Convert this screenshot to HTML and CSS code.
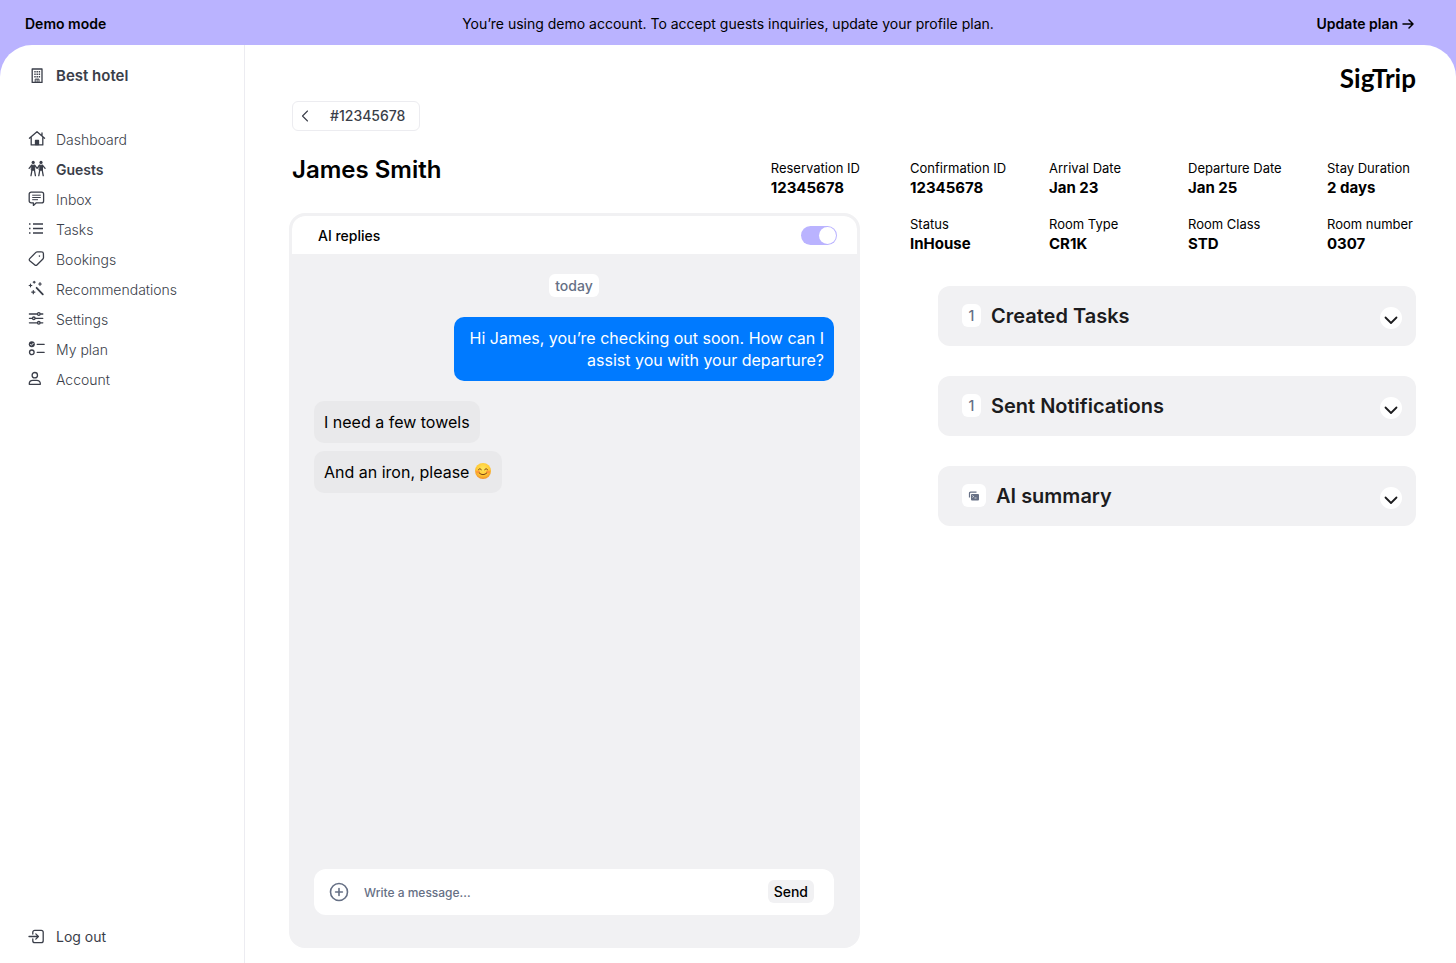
FILE: index.html
```html
<!DOCTYPE html>
<html lang="en">
<head>
<meta charset="utf-8">
<meta name="viewport" content="width=device-width, initial-scale=1">
<title>SigTrip – James Smith</title>
<link rel="stylesheet" href="styles.css">
</head>
<body>
<div class="banner">
  <strong class="banner-mode">Demo mode</strong>
  <span class="banner-text">You’re using demo account. To accept guests inquiries, update your profile plan.</span>
  <a class="banner-link" href="#plan">Update plan
    <svg width="12" height="12" viewBox="0 0 12 12" fill="none" stroke="currentColor" stroke-width="1.5" stroke-linecap="round" stroke-linejoin="round" aria-hidden="true"><path d="M1 6h10M7 2l4 4-4 4"/></svg>
  </a>
</div>
<div class="shell">
  <aside class="sidebar">
    <div class="hotel">
      <svg class="icon" viewBox="0 0 18 18" fill="none" stroke="currentColor" stroke-width="1.3" aria-hidden="true"><path d="M4.2 2h9.8v13.4H4.2z" stroke-linejoin="round"/><path d="M6.3 4.7h1.4M8.5 4.7h1.4M10.7 4.7h1.4M6.3 7.2h1.4M8.5 7.2h1.4M10.7 7.2h1.4M6.3 9.7h1.4M8.5 9.7h1.4M10.7 9.7h1.4" stroke-width="1.4"/><path d="M7.2 15v-2.9h3.8V15M9.1 12v3" stroke-width="1"/></svg>
      <span>Best hotel</span>
    </div>
    <nav class="nav" aria-label="Main">
      <a href="#dashboard">
        <svg class="icon" viewBox="0 0 18 18" fill="none" stroke="currentColor" stroke-width="1.3" stroke-linecap="round" stroke-linejoin="round" aria-hidden="true"><path d="M1.4 8.2 9 1.7l7.6 6.5M3.2 7v7.9h11.6V7M14 5.6V3"/><path d="M7.5 14.6v-4.2h3v4.2z" fill="currentColor"/></svg>
        <span>Dashboard</span></a>
      <a class="active" href="#guests" aria-current="page">
        <svg class="icon" viewBox="0 0 18 18" fill="none" stroke="currentColor" stroke-linecap="round" stroke-linejoin="round" aria-hidden="true"><circle cx="5.2" cy="2.4" r="1.6" fill="currentColor" stroke="none"/><circle cx="13" cy="2.4" r="1.6" fill="currentColor" stroke="none"/><path d="M3.7 5.2h3v5h-3zM11.5 5.2h3v5h-3z" fill="currentColor" stroke-width="1"/><path d="m3.6 5.3-2.5 3M6.8 5.3l2.3 3.1 2.3-3.1M14.6 5.3l2.5 3M4 10l-1 5.6M6.4 10l1 5.6M11.8 10l-1 5.6M14.2 10l1 5.6" stroke-width="1.3"/></svg>
        <span>Guests</span></a>
      <a href="#inbox">
        <svg class="icon" viewBox="0 0 18 18" fill="none" stroke="currentColor" stroke-width="1.3" stroke-linecap="round" stroke-linejoin="round" aria-hidden="true"><path d="M3.2 2.1h10.4a2 2 0 0 1 2 2v6.8a2 2 0 0 1-2 2H8.1l-2.7 2.5v-2.5H3.2a2 2 0 0 1-2-2V4.1a2 2 0 0 1 2-2z"/><path d="M4.6 5.2h7.8M4.6 7.5h7.8M4.6 9.7h5" stroke-width="1"/></svg>
        <span>Inbox</span></a>
      <a href="#tasks">
        <svg class="icon" viewBox="0 0 18 18" fill="none" stroke="currentColor" stroke-width="1.3" aria-hidden="true"><path d="M5 4h10M5 8.5h10M5 13h10"/><path d="M1 4h1.5M1 8.5h1.5M1 13h1.5" stroke-width="1.6"/></svg>
        <span>Tasks</span></a>
      <a href="#bookings">
        <svg class="icon" viewBox="0 0 18 18" fill="none" stroke="currentColor" stroke-width="1.3" stroke-linejoin="round" aria-hidden="true"><path d="m1.7 8.6 6.2-6.2c.4-.4.9-.6 1.4-.6l4.4.1c.9 0 1.6.7 1.7 1.6l.1 4c0 .6-.2 1.1-.6 1.5l-6 6c-.6.6-1.500.6-2 0L1.700 10.700c-.6-.6-.6-1.500 0-2.100z"/><circle cx="11.4" cy="6.1" r=".8" fill="currentColor" stroke="none"/></svg>
        <span>Bookings</span></a>
      <a href="#recommendations">
        <svg class="icon" viewBox="0 0 18 18" fill="none" stroke="currentColor" stroke-width="1.2" stroke-linecap="round" aria-hidden="true"><path d="m8.6 7.8 6.2 6.6" stroke-width="1.8"/><path d="M2.5 4.2v2.6M1.200 5.500h2.600M6.200 1.300v1.800M5.300 2.200h1.800M12 2.700v2.600M10.700 4h2.600M5.300 10.500v3.200M3.700 12.100h3.200"/></svg>
        <span>Recommendations</span></a>
      <a href="#settings">
        <svg class="icon" viewBox="0 0 18 18" fill="none" stroke="currentColor" stroke-width="1.3" stroke-linecap="round" aria-hidden="true"><path d="M1.4 4h7.8M12.4 4h2.4M1.4 8.3h2.8M7.4 8.3h7.4M1.4 12.8h7.8M12.4 12.8h2.4"/><circle cx="10.8" cy="4" r="1.3"/><circle cx="5.8" cy="8.3" r="1.3"/><circle cx="10.8" cy="12.8" r="1.3"/></svg>
        <span>Settings</span></a>
      <a href="#my-plan">
        <svg class="icon" viewBox="0 0 18 18" fill="none" stroke="currentColor" stroke-width="1.3" stroke-linecap="round" aria-hidden="true"><circle cx="3.8" cy="4.3" r="3" fill="currentColor" stroke="none"/><path d="m2.5 4.4.9.9 1.8-2" stroke="#fff" stroke-width=".9"/><circle cx="3.8" cy="12.3" r="2.3"/><path d="M9.2 4.3h7M9.2 12.3h7"/></svg>
        <span>My plan</span></a>
      <a href="#account">
        <svg class="icon" viewBox="0 0 18 18" fill="none" stroke="currentColor" stroke-width="1.3" stroke-linejoin="round" aria-hidden="true"><circle cx="6.8" cy="5.2" r="2.7"/><path d="M1.3 14.3v-.7c0-2 1.5-3.2 3.5-3.2h4c2 0 3.5 1.2 3.5 3.2v.7z"/></svg>
        <span>Account</span></a>
    </nav>
    <button class="logout" type="button">
      <svg class="icon" viewBox="0 0 18 18" fill="none" stroke="currentColor" stroke-width="1.3" stroke-linecap="round" stroke-linejoin="round" aria-hidden="true"><path d="M4.8 6V4.3a2 2 0 0 1 2-2h6.4a2 2 0 0 1 2 2v8.4a2 2 0 0 1-2 2H6.8a2 2 0 0 1-2-2V11M1 8.5h9.3M7.8 5.9l2.6 2.6-2.6 2.6"/></svg>
      <span>Log out</span>
    </button>
  </aside>

  <main class="main">
    <header class="topbar"><span class="logo">SigTrip</span></header>
    <button class="back" type="button">
      <svg width="8" height="12" viewBox="0 0 8 12" fill="none" stroke="currentColor" stroke-width="1.1" stroke-linecap="round" stroke-linejoin="round" aria-hidden="true"><path d="M6.500 1 1.500 6l5 5"/></svg>
      <span>#12345678</span>
    </button>

    <div class="content">
      <section class="conversation">
        <div class="guest">
          <h1>James Smith</h1>
          <dl class="fact"><dt>Reservation ID</dt><dd>12345678</dd></dl>
        </div>
        <div class="chat">
          <div class="chat-head">
            <label for="ai-replies">AI replies</label>
            <input class="switch" id="ai-replies" type="checkbox" role="switch" checked>
          </div>
          <div class="messages">
            <span class="day">today</span>
            <p class="bubble sent">Hi James, you’re checking out soon. How can I assist you with your departure?</p>
            <p class="bubble">I need a few towels</p>
            <p class="bubble">And an iron, please
              <svg class="emoji" viewBox="0 0 18 18" role="img" aria-label="Smiling face"><defs><radialGradient id="face" cx=".5" cy=".35" r=".65"><stop offset="0" stop-color="#ffe65c"/><stop offset=".65" stop-color="#ffc833"/><stop offset="1" stop-color="#f0902a"/></radialGradient></defs><circle cx="9" cy="9" r="8" fill="url(#face)"/><ellipse cx="4" cy="10" rx="2" ry="1.4" fill="#ff7b3a" opacity=".6"/><ellipse cx="14" cy="10" rx="2" ry="1.4" fill="#ff7b3a" opacity=".6"/><path d="M4.400 7.600q1.500-2.200 3 0M10.600 7.600q1.500-2.200 3 0M5.200 11q3.800 3.600 7.600 0" fill="none" stroke="#7a4216" stroke-width="1" stroke-linecap="round"/></svg></p>
          </div>
          <form class="composer">
            <button class="attach" type="button" aria-label="Add attachment">
              <svg width="20" height="20" viewBox="0 0 20 20" fill="none" stroke="currentColor" stroke-width="1.6" stroke-linecap="round" aria-hidden="true"><circle cx="10" cy="10" r="8.5"/><path d="M10 6.600v6.800M6.600 10h6.800"/></svg>
            </button>
            <input class="message-input" type="text" placeholder="Write a message..." aria-label="Message">
            <button class="send" type="button">Send</button>
          </form>
        </div>
      </section>

      <section class="details">
        <dl class="facts">
          <div class="fact"><dt>Confirmation ID</dt><dd>12345678</dd></div>
          <div class="fact"><dt>Arrival Date</dt><dd>Jan 23</dd></div>
          <div class="fact"><dt>Departure Date</dt><dd>Jan 25</dd></div>
          <div class="fact"><dt>Stay Duration</dt><dd>2 days</dd></div>
          <div class="fact"><dt>Status</dt><dd>InHouse</dd></div>
          <div class="fact"><dt>Room Type</dt><dd>CR1K</dd></div>
          <div class="fact"><dt>Room Class</dt><dd>STD</dd></div>
          <div class="fact"><dt>Room number</dt><dd>0307</dd></div>
        </dl>
        <div class="panels">
          <button class="panel" type="button" aria-expanded="false">
            <span class="badge">1</span><span class="panel-title">Created Tasks</span>
            <svg class="chevron" viewBox="0 0 22 22" aria-hidden="true"><circle cx="11" cy="11" r="11" fill="#fff"/><path d="m5.500 10.500 5.500 5.500 5.500-5.500" fill="none" stroke="currentColor" stroke-width="1.800" stroke-linecap="round" stroke-linejoin="round"/></svg>
          </button>
          <button class="panel" type="button" aria-expanded="false">
            <span class="badge">1</span><span class="panel-title">Sent Notifications</span>
            <svg class="chevron" viewBox="0 0 22 22" aria-hidden="true"><circle cx="11" cy="11" r="11" fill="#fff"/><path d="m5.500 10.500 5.500 5.500 5.500-5.500" fill="none" stroke="currentColor" stroke-width="1.800" stroke-linecap="round" stroke-linejoin="round"/></svg>
          </button>
          <button class="panel" type="button" aria-expanded="false">
            <span class="badge"><svg width="12" height="12" viewBox="0 0 12 12" aria-hidden="true"><path d="M1.500 7.500V3.200a1 1 0 0 1 1-1h6" fill="none" stroke="currentColor" stroke-width="1.200"/><rect x="3" y="4" width="8" height="6.500" rx="1" fill="currentColor"/><path d="m4.400 5.500 1.300 1-1.300 1M6.500 8h2" fill="none" stroke="#fff" stroke-width=".7"/></svg></span><span class="panel-title">AI summary</span>
            <svg class="chevron" viewBox="0 0 22 22" aria-hidden="true"><circle cx="11" cy="11" r="11" fill="#fff"/><path d="m5.500 10.500 5.500 5.500 5.500-5.500" fill="none" stroke="currentColor" stroke-width="1.800" stroke-linecap="round" stroke-linejoin="round"/></svg>
          </button>
        </div>
      </section>
    </div>
  </main>
</div>
</body>
</html>
```

FILE: styles.css
```css
* {
  box-sizing: border-box;
}

:root {
  --lilac: #bab3ff;
  --ink: #3a3e49;
  --surface: #f1f1f3;
  --muted: #667085;
}

body {
  margin: 0;
  min-height: 100vh;
  display: flex;
  flex-direction: column;
  background: var(--lilac);
  color: #000;
  font-family: Inter, "Liberation Sans", sans-serif;
  font-size: 14px;
  line-height: 20px;
}

h1, p, dl, dd {
  margin: 0;
}

a {
  color: inherit;
  text-decoration: none;
}

button {
  border: 0;
  padding: 0;
  background: none;
  color: inherit;
  font: inherit;
  cursor: pointer;
}

.banner {
  display: grid;
  grid-template-columns: 1fr auto 1fr;
  align-items: center;
  padding: 14px 25px 11px;
  column-gap: 16px;
}

.banner-mode {
  font-weight: 600;
}

.banner-link {
  justify-self: end;
  display: flex;
  align-items: center;
  gap: 4px;
  padding-right: 17px;
  font-weight: 600;
}

.shell {
  flex: 1;
  display: flex;
  background: #fff;
  border-radius: 32px 32px 0 0;
}

.sidebar {
  flex: none;
  width: 245px;
  display: flex;
  flex-direction: column;
  padding: 21px 16px 16px 28px;
  border-right: 1px solid #ececf1;
  color: var(--ink);
}

.icon {
  flex: none;
  width: 18px;
  height: 18px;
}

.hotel, .nav a, .logout {
  display: flex;
  align-items: center;
  gap: 10px;
}

.hotel {
  font-size: 15px;
  font-weight: 600;
}

.nav {
  display: flex;
  flex-direction: column;
  gap: 10px;
  margin-top: 44px;
  font-weight: 300;
}

.nav .icon {
  margin-bottom: 2px;
}

.nav .active {
  font-weight: 600;
}

.logout {
  margin-top: auto;
}

.main {
  flex: 1;
  min-width: 0;
  display: flex;
  flex-direction: column;
  padding: 16px 40px 15px 44px;
}

.topbar {
  display: flex;
  justify-content: flex-end;
  height: 40px;
}

.logo {
  font-family: Lato, sans-serif;
  font-size: 26px;
  font-weight: 700;
  line-height: 34px;
}

.back {
  align-self: flex-start;
  display: flex;
  align-items: center;
  gap: 21px;
  height: 30px;
  margin-left: 3px;
  padding: 0 14px 0 8px;
  border: 1px solid #ececf0;
  border-radius: 6px;
  color: var(--ink);
  font-weight: 500;
}

.content {
  flex: 1;
  display: grid;
  grid-template-columns: minmax(0, 571fr) minmax(0, 506fr);
  column-gap: 50px;
  margin-top: 29px;
}

.conversation {
  display: flex;
  flex-direction: column;
}

.guest {
  display: flex;
  justify-content: space-between;
  padding-left: 3px;
  height: 53px;
}

h1 {
  font-size: 24px;
  font-weight: 600;
  line-height: 20px;
}

.fact {
  white-space: nowrap;
}

.fact dt {
  margin-bottom: 2px;
  font-size: 13px;
  line-height: 16px;
}

.fact dd {
  font-size: 15px;
  font-weight: 700;
  line-height: 20px;
}

.chat {
  flex: 1;
  display: flex;
  flex-direction: column;
  overflow: hidden;
  border: 3px solid var(--surface);
  border-radius: 16px;
  background: var(--surface);
}

.chat-head {
  display: flex;
  align-items: center;
  justify-content: space-between;
  height: 38px;
  padding: 1px 20px 0 26px;
  background: #fff;
  border-radius: 13px 13px 0 0;
  font-weight: 500;
}

.switch {
  appearance: none;
  display: flex;
  justify-content: flex-end;
  width: 36px;
  height: 19px;
  margin: 0;
  padding: 1px;
  border-radius: 10px;
  background: var(--lilac);
}

.switch::before {
  content: "";
  width: 17px;
  height: 17px;
  border-radius: 50%;
  background: #fff;
}

.switch:not(:checked) {
  justify-content: flex-start;
  background: #d0d0d6;
}

.messages {
  flex: 1;
  display: flex;
  flex-direction: column;
  align-items: flex-start;
  gap: 8px;
  padding: 20px 23px 20px 22px;
}

.day {
  align-self: center;
  margin-bottom: 12px;
  padding: 2px 6px 1px;
  border-radius: 6px;
  background: #fff;
  color: var(--muted);
  font-weight: 500;
}

.bubble {
  padding: 10px;
  border-radius: 10px;
  background: #e9e9eb;
  font-size: 16px;
  line-height: 22px;
}

.bubble.sent {
  align-self: flex-end;
  max-width: 380px;
  margin-bottom: 12px;
  background: #007aff;
  color: #fff;
  text-align: right;
}

.emoji {
  width: 18px;
  height: 18px;
  vertical-align: -2px;
}

.composer {
  display: flex;
  align-items: center;
  height: 46px;
  margin: 0 23px 30px 22px;
  padding: 0 20px 0 15px;
  border-radius: 12px;
  background: #fff;
}

.attach {
  display: flex;
  color: var(--muted);
}

.message-input {
  flex: 1;
  min-width: 0;
  margin: 0 15px;
  padding: 1px 0 0;
  border: 0;
  background: none;
  font: 500 12px/20px Inter, "Liberation Sans", sans-serif;
}

.message-input::placeholder {
  color: var(--muted);
}

.send {
  margin-bottom: 2px;
  padding: 2px 6px 1px;
  border-radius: 6px;
  background: var(--surface);
  font-weight: 500;
}

.facts {
  display: grid;
  grid-template-columns: repeat(4, minmax(0, 1fr));
  gap: 18px 50px;
}

.panels {
  display: flex;
  flex-direction: column;
  gap: 30px;
  margin: 32px 0 0 28px;
}

.panel {
  display: flex;
  align-items: center;
  gap: 10px;
  height: 60px;
  padding: 0 14px 0 24px;
  border-radius: 12px;
  background: var(--surface);
  color: #1c1c1e;
}

.badge {
  display: flex;
  align-items: center;
  justify-content: center;
  min-width: 19px;
  height: 23px;
  margin-bottom: 1px;
  padding: 0 6px;
  border-radius: 6px;
  background: #fff;
  color: var(--muted);
  font-weight: 500;
}

.panel-title {
  flex: 1;
  font-size: 20px;
  font-weight: 600;
  text-align: left;
}

.chevron {
  width: 22px;
  height: 22px;
  margin-top: 4px;
}
```
